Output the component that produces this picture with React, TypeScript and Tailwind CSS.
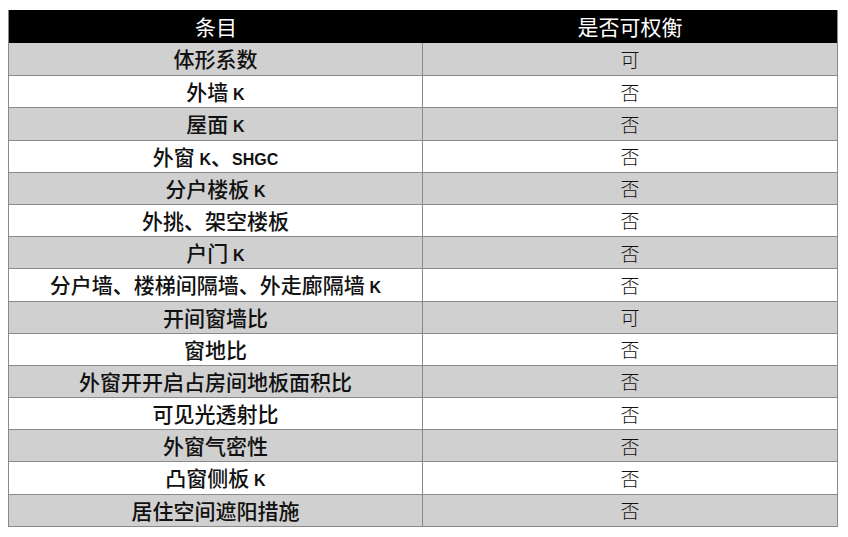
import React from "react";

const rows: [React.ReactNode, string][] = [
  ["体形系数", "可"],
  [<>外墙 <K /></>, "否"],
  [<>屋面 <K /></>, "否"],
  [<>外窗 <K />、<L>SHGC</L></>, "否"],
  [<>分户楼板 <K /></>, "否"],
  ["外挑、架空楼板", "否"],
  [<>户门 <K /></>, "否"],
  [<>分户墙、楼梯间隔墙、外走廊隔墙 <K /></>, "否"],
  ["开间窗墙比", "可"],
  ["窗地比", "否"],
  ["外窗开开启占房间地板面积比", "否"],
  ["可见光透射比", "否"],
  ["外窗气密性", "否"],
  [<>凸窗侧板 <K /></>, "否"],
  ["居住空间遮阳措施", "否"],
];

function K() {
  return <L>K</L>;
}
function L({ children }: { children: React.ReactNode }) {
  return (
    <span className="font-['Liberation_Sans',sans-serif] font-bold text-[16px]">{children}</span>
  );
}

export default function App() {
  return (
    <div className="w-[848px] h-[537px] bg-white pt-[10px] pl-[8px] font-['Noto_Sans_CJK_SC',sans-serif]">
      <div className="w-[830px] border-l border-r border-b border-[#8a8a8a]">
        <div className="grid grid-cols-2 h-[33px] bg-black text-white text-[21px] leading-[33px]">
          <div className="text-center">条目</div>
          <div className="text-center">是否可权衡</div>
        </div>
        {rows.map(([a, b], i) => (
          <div
            key={i}
            className={`grid grid-cols-2 h-[32.2px] ${i > 0 ? "border-t border-[#8a8a8a]" : ""} ${
              i % 2 === 0 ? "bg-[#d0d0d0]" : "bg-white"
            }`}
          >
            <div className="flex items-center justify-center text-[21px] font-medium text-[#111] border-r border-[#8a8a8a]">
              <span>{a}</span>
            </div>
            <div className="flex items-center justify-center text-[19px] font-light text-[#111]">
              {b}
            </div>
          </div>
        ))}
      </div>
    </div>
  );
}
